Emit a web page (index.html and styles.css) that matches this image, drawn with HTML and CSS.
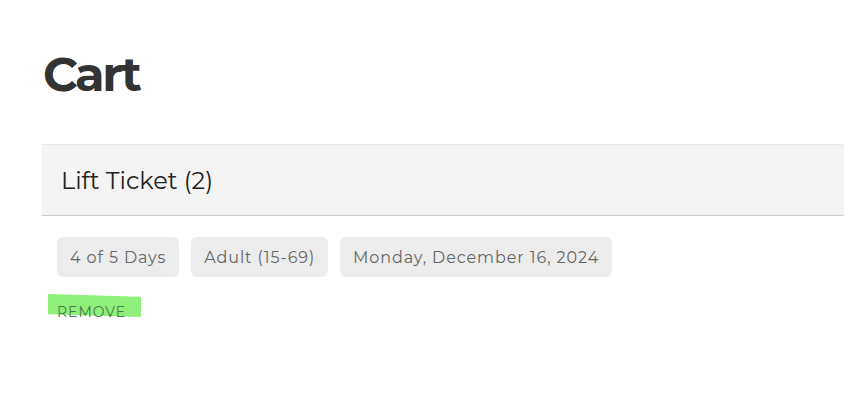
FILE: index.html
```html
<!DOCTYPE html>
<html lang="en">
<head>
  <meta charset="UTF-8">
  <meta name="viewport" content="width=device-width, initial-scale=1.0">
  <title>Cart</title>
  <link rel="stylesheet" href="styles.css">
</head>
<body>
  <main class="cart">
    <h1 class="cart-title">Cart</h1>
    <section class="cart-group">
      <div class="group-header">Lift Ticket (2)</div>
      <div class="item">
        <div class="chips">
          <span class="chip">4 of 5 Days</span>
          <span class="chip">Adult (15-69)</span>
          <span class="chip">Monday, December 16, 2024</span>
        </div>
        <div class="remove-wrap">
          <button class="remove">REMOVE</button>
        </div>
      </div>
    </section>
  </main>
</body>
</html>
```

FILE: styles.css
```css
body, html {
  margin: 0;
  padding: 0;
  background: #fff;
  overflow: hidden;
}
body {
  font-family: "Montserrat", "Lato", sans-serif;
  color: #333;
}
.cart {
  padding: 49px 0 0 42px;
}
.cart-title {
  margin: 0 0 0 1px;
  font-weight: 700;
  font-size: 48px;
  line-height: 50px;
  color: #333;
  letter-spacing: -2.5px;
}
.cart-group {
  margin-top: 45px;
}
.group-header {
  background: #f4f4f4;
  border-top: 1px solid #e6e6e6;
  border-bottom: 1px solid #cfcfcf;
  height: 70px;
  display: flex;
  align-items: center;
  padding-left: 19px;
  font-size: 24px;
  color: #222;
}
.item {
  padding: 21px 0 0 15px;
}
.chips {
  display: flex;
  gap: 12px;
}
.chip {
  display: flex;
  align-items: center;
  height: 40px;
  padding: 0 13px;
  border-radius: 6px;
  background: #ececec;
  color: #666;
  font-size: 16px;
  letter-spacing: 0.9px;
}
.remove-wrap {
  margin: 17px 0 0 -9px;
}
.remove {
  position: relative;
  display: block;
  width: 93px;
  height: 26px;
  padding: 9px 0 0 9px;
  border: none;
  background: none;
  color: #4c7a48;
  font-family: "Montserrat", "Lato", sans-serif;
  font-size: 14px;
  line-height: 16px;
  letter-spacing: 1px;
  text-align: left;
  cursor: pointer;
}
/* highlighter stroke behind the label */
.remove::before {
  content: "";
  position: absolute;
  left: 0;
  top: 0;
  width: 93px;
  height: 23px;
  background: #8ef07a;
  clip-path: polygon(0 0, 100% 12%, 100% 100%, 0 88%);
  z-index: -1;
}
.remove-wrap {
  position: relative;
  z-index: 0;
}
```
